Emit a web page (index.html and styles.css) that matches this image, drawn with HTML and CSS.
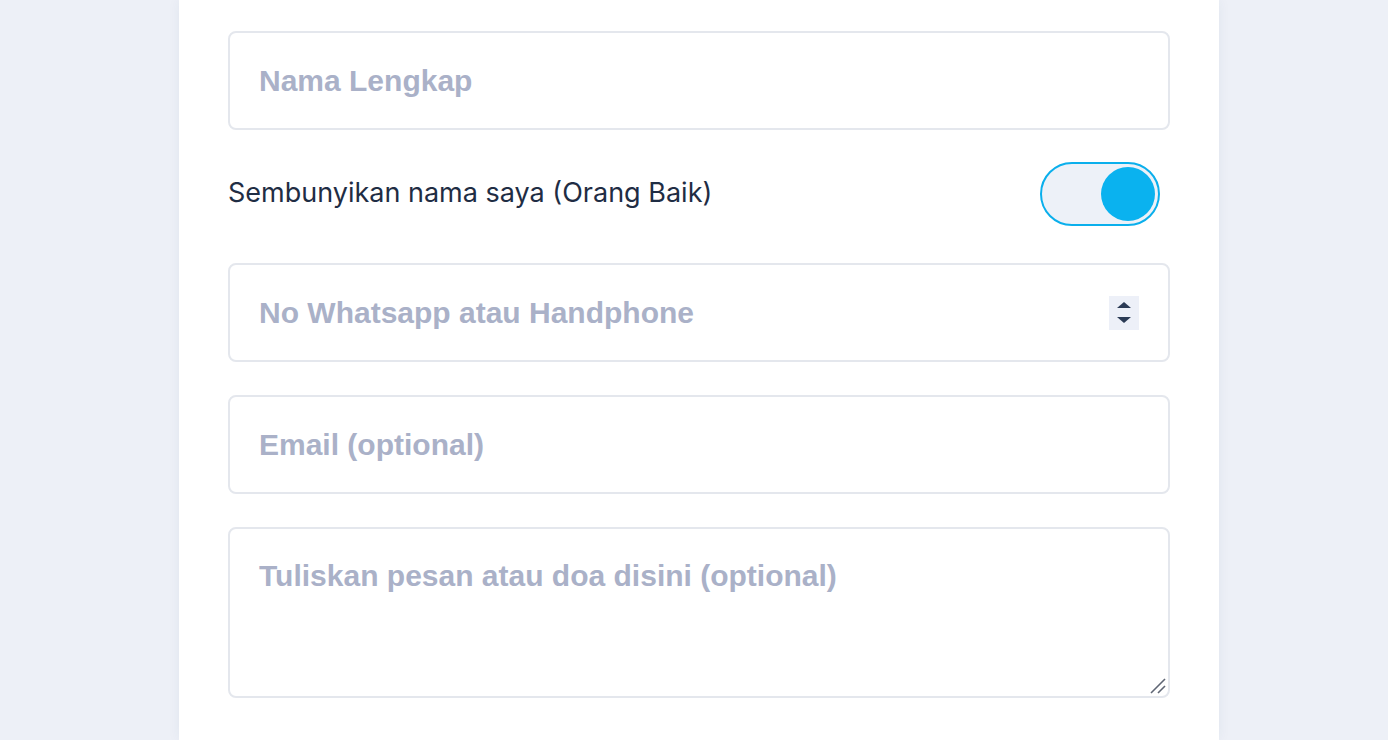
FILE: index.html
```html
<!DOCTYPE html>
<html lang="id">
<head>
    <meta charset="UTF-8">
    <meta name="viewport" content="width=device-width, initial-scale=1.0">
    <title>Form Donasi</title>
    <link rel="stylesheet" href="styles.css">
</head>
<body>
    <div class="card">
        <form class="donor-form">
            <input type="text" class="field" placeholder="Nama Lengkap">

            <div class="toggle-row">
                <label for="anonim" class="toggle-label">Sembunyikan nama saya (Orang Baik)</label>
                <label class="switch">
                    <input type="checkbox" id="anonim" checked>
                    <span class="knob"></span>
                </label>
            </div>

            <div class="field phone-field">
                <input type="text" class="phone-input" placeholder="No Whatsapp atau Handphone">
                <span class="spinner">
                    <svg width="30" height="34" viewBox="0 0 30 34">
                        <polygon points="15,6 22,12 8,12" fill="#2b3b55"/>
                        <polygon points="8,21 22,21 15,27" fill="#2b3b55"/>
                    </svg>
                </span>
            </div>

            <input type="email" class="field" placeholder="Email (optional)">

            <div class="message-wrap">
                <textarea class="field message" placeholder="Tuliskan pesan atau doa disini (optional)"></textarea>
                <svg class="grip" width="18" height="18" viewBox="0 0 18 18">
                    <line x1="2" y1="16" x2="16" y2="2" stroke="#5f6674" stroke-width="1.6"/>
                    <line x1="9" y1="16" x2="16" y2="9" stroke="#5f6674" stroke-width="1.6"/>
                </svg>
            </div>
        </form>
    </div>
</body>
</html>
```

FILE: styles.css
```css
body {
    margin: 0;
    padding-left: 10px;
    background-color: #edf0f7;
    display: flex;
    justify-content: center;
    min-height: 100vh;
    overflow: hidden;
}

.card {
    width: 1040px;
    background-color: #ffffff;
    box-shadow: 0 0 12px rgba(40, 60, 110, 0.06);
    padding: 31px 49px 40px;
    box-sizing: border-box;
}

.donor-form {
    display: flex;
    flex-direction: column;
    gap: 33px;
}

.field {
    box-sizing: border-box;
    width: 100%;
    height: 99px;
    padding: 0 29px;
    border: 2px solid #e4e7ed;
    border-radius: 8px;
    background: #ffffff;
    font-family: "Liberation Sans", Arial, sans-serif;
    font-weight: bold;
    font-size: 30px;
    color: #1f2d44;
    outline: none;
}

.field::placeholder,
.phone-input::placeholder {
    color: #aab1c8;
    opacity: 1;
}

.toggle-row {
    display: flex;
    justify-content: space-between;
    align-items: center;
    height: 64px;
    margin-top: -1px;
    padding-bottom: 4px;
    padding-right: 10px;
}

.toggle-label {
    font-family: Inter, "Noto Sans", sans-serif;
    font-size: 27px;
    color: #1f2d44;
    margin-top: -3px;
}

.switch {
    position: relative;
    display: block;
    width: 120px;
    height: 64px;
    cursor: pointer;
}

.switch input {
    display: none;
}

.knob {
    display: flex;
    align-items: center;
    justify-content: flex-end;
    box-sizing: border-box;
    width: 100%;
    height: 100%;
    padding: 3px;
    border: 2px solid #0aafec;
    border-radius: 32px;
    background-color: #edf1f8;
}

.knob::after {
    content: "";
    width: 54px;
    height: 54px;
    border-radius: 50%;
    background-color: #0ab2ef;
}

.phone-field {
    display: flex;
    align-items: center;
    padding-right: 29px;
}

.phone-input {
    flex: 1;
    border: none;
    outline: none;
    padding: 0;
    height: 100%;
    font: inherit;
    color: inherit;
    background: transparent;
}

.spinner {
    display: block;
    width: 30px;
    height: 34px;
    background-color: #edf0f8;
}

.spinner svg {
    display: block;
}

.message-wrap {
    position: relative;
}

.message {
    display: block;
    height: 171px;
    padding: 29px 29px;
    line-height: 36px;
    resize: none;
}

.grip {
    position: absolute;
    right: 3px;
    bottom: 3px;
}
```
